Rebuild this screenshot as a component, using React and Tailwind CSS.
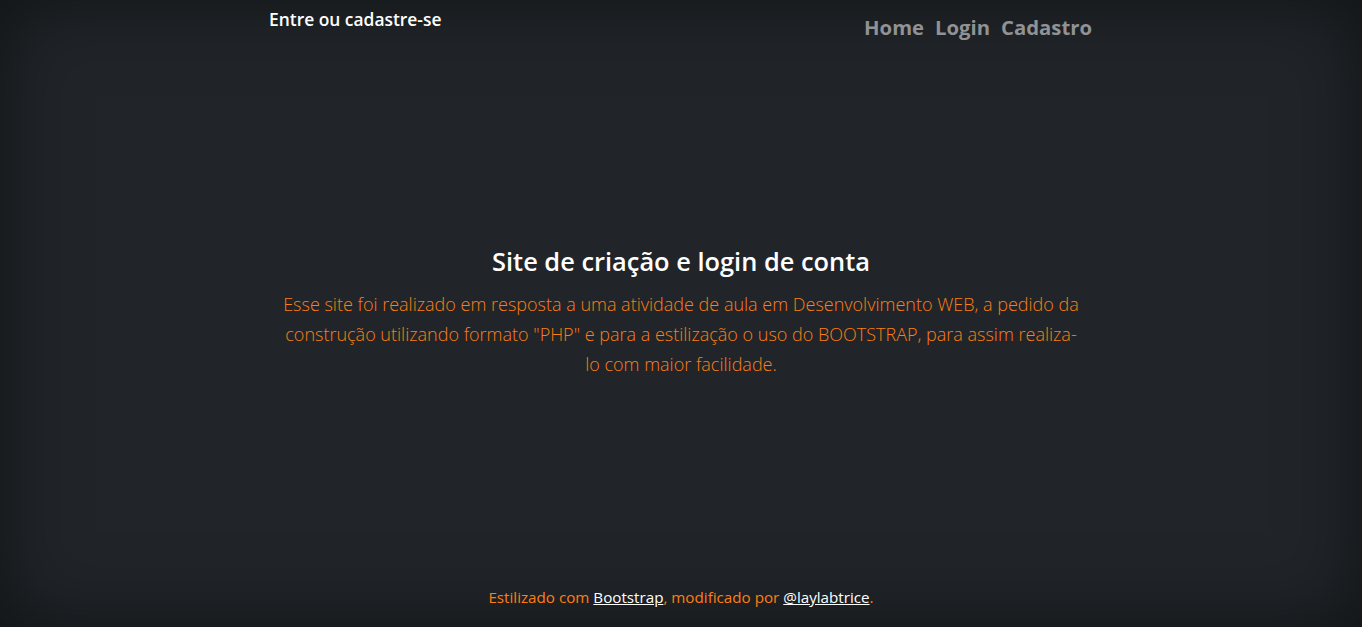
import React from "react";

export default function App() {
  return (
    <div
      className="flex h-screen w-full flex-col bg-[#212529] text-center text-white shadow-[inset_0_0_5rem_rgba(0,0,0,0.5)]"
      style={{ fontFamily: '"Open Sans", "Noto Sans", sans-serif' }}
    >
      {/* header */}
      <header className="mx-auto flex w-[822px] items-start justify-between">
        <h3 className="-ml-px mt-[6px] text-[17.4px] font-semibold leading-[27px]">Entre ou cadastre-se</h3>
        <nav className="mt-[12px] flex gap-[11px] text-[20.3px] font-bold leading-[30px]">
          <a href="#" className="text-[#909294]">Home</a>
          <a href="#" className="text-[#909294]">Login</a>
          <a href="#" className="text-[#909294]">Cadastro</a>
        </nav>
      </header>

      {/* main */}
      <main className="flex flex-1 flex-col items-center justify-center pb-[5px]">
        <h1 className="text-[25.4px] font-semibold leading-[34px]">Site de criação e login de conta</h1>
        <p className="mt-[11px] w-[800px] text-[18px] font-light leading-[30px] text-[#fd7e14]">
          Esse site foi realizado em resposta a uma atividade de aula em Desenvolvimento WEB, a pedido da construção utilizando formato "PHP" e para a estilização o uso do BOOTSTRAP, para assim realiza-lo com maior facilidade.
        </p>
      </main>

      {/* footer */}
      <footer className="pb-[18px] text-[15.2px] leading-[24px] text-[#fd7e14]">
        Estilizado com <a href="#" className="text-white underline">Bootstrap</a>, modificado por{" "}
        <a href="#" className="text-white underline">@laylabtrice</a>.
      </footer>
    </div>
  );
}
